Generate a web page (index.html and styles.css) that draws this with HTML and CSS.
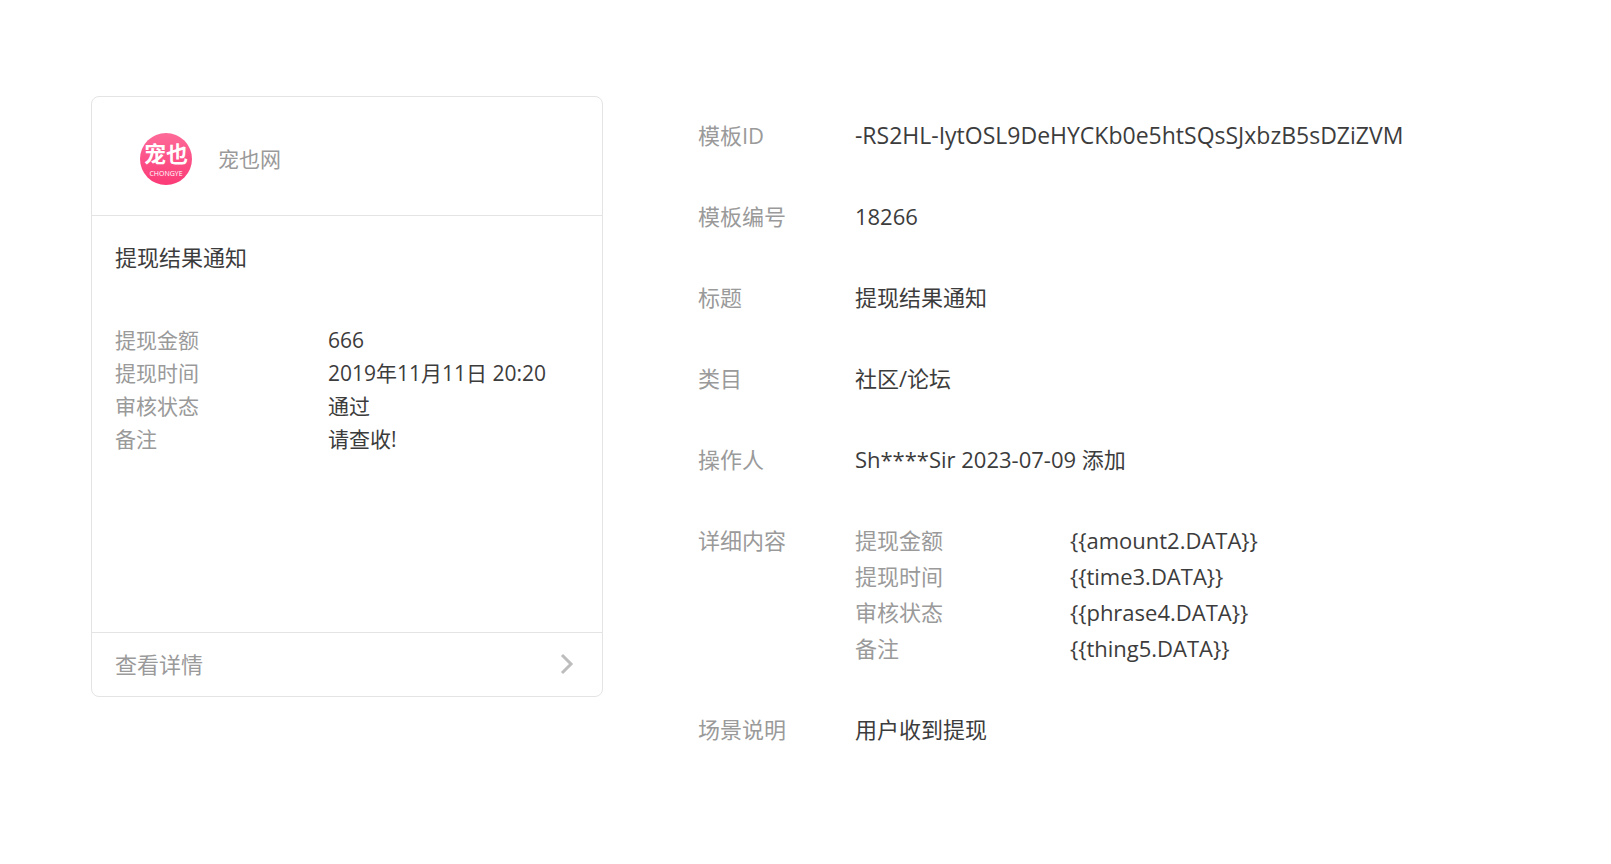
FILE: index.html
```html
<!DOCTYPE html>
<html lang="zh-CN">
<head>
    <meta charset="UTF-8">
    <meta name="viewport" content="width=device-width, initial-scale=1.0">
    <title>模板详情</title>
    <link rel="stylesheet" href="styles.css">
</head>
<body>
    <main>
        <section class="card">
            <header>
                <svg class="logo" viewBox="0 0 52 52" role="img" aria-label="宠也网">
                    <defs>
                        <linearGradient id="rosa" x1="0" y1="0" x2="0" y2="1">
                            <stop offset="0" stop-color="#fd6b99"/>
                            <stop offset="1" stop-color="#fb3a77"/>
                        </linearGradient>
                    </defs>
                    <circle cx="26" cy="26" r="26" fill="url(#rosa)"/>
                    <text class="logo-name" x="26" y="29" text-anchor="middle">宠也</text>
                    <text class="logo-sub" x="26" y="43" text-anchor="middle">CHONGYE</text>
                </svg>
                <span>宠也网</span>
            </header>
            <div class="content">
                <h1>提现结果通知</h1>
                <dl class="fields">
                    <dt>提现金额</dt>
                    <dd>666</dd>
                    <dt>提现时间</dt>
                    <dd>2019年11月11日 20:20</dd>
                    <dt>审核状态</dt>
                    <dd>通过</dd>
                    <dt>备注</dt>
                    <dd>请查收!</dd>
                </dl>
            </div>
            <a class="more" href="#">
                查看详情
                <svg width="14" height="22" viewBox="0 0 14 22" aria-hidden="true">
                    <path d="M2 2l9 9-9 9" fill="none" stroke="#bdbdbd" stroke-width="3"/>
                </svg>
            </a>
        </section>

        <dl class="details">
            <dt>模板ID</dt>
            <dd class="template-id">-RS2HL-IytOSL9DeHYCKb0e5htSQsSJxbzB5sDZiZVM</dd>
            <dt>模板编号</dt>
            <dd>18266</dd>
            <dt>标题</dt>
            <dd>提现结果通知</dd>
            <dt>类目</dt>
            <dd>社区/论坛</dd>
            <dt>操作人</dt>
            <dd>Sh****Sir 2023-07-09 添加</dd>
            <dt>详细内容</dt>
            <dd>
                <dl class="keys">
                    <dt>提现金额</dt>
                    <dd>{{amount2.DATA}}</dd>
                    <dt>提现时间</dt>
                    <dd>{{time3.DATA}}</dd>
                    <dt>审核状态</dt>
                    <dd>{{phrase4.DATA}}</dd>
                    <dt>备注</dt>
                    <dd>{{thing5.DATA}}</dd>
                </dl>
            </dd>
            <dt>场景说明</dt>
            <dd>用户收到提现</dd>
        </dl>
    </main>
</body>
</html>
```
FILE: styles.css
```css
* {
    margin: 0;
    padding: 0;
    box-sizing: border-box;
}

body {
    font-family: "Open Sans", "Noto Sans CJK SC", sans-serif;
    font-size: 22px;
    line-height: 36px;
    color: #3c3c3c;
    background-color: #fff;
}

main {
    display: grid;
    grid-template-columns: 5fr 8fr;
    gap: 95px;
    align-items: start;
    padding: 96px 94px 96px 91px;
}

dt {
    color: #9a9a9a;
}

/* Tarjeta de vista previa */
.card {
    border: 1px solid #e4e4e4;
    border-radius: 8px;
}

.card header {
    display: flex;
    align-items: center;
    gap: 26px;
    padding: 35px 48px 29px;
    font-size: 21px;
    line-height: 54px;
    color: #9a9a9a;
    border-bottom: 1px solid #e4e4e4;
}

.logo {
    width: 52px;
    height: 52px;
}

.logo text {
    fill: #fff;
}

.logo-name {
    font-size: 22px;
    font-weight: 700;
}

.logo-sub {
    font-size: 7px;
}

.content {
    min-height: 416px;
    padding: 23px;
}

h1 {
    font-size: 22px;
    font-weight: 400;
}

.fields {
    display: grid;
    grid-template-columns: 213px 1fr;
    margin-top: 49px;
    font-size: 21px;
    line-height: 33px;
}

.more {
    display: flex;
    justify-content: space-between;
    align-items: center;
    padding: 13px 28px 14px 23px;
    color: #9a9a9a;
    text-decoration: none;
    border-top: 1px solid #e4e4e4;
}

/* Datos de la plantilla */
.details {
    display: grid;
    grid-template-columns: 157px 1fr;
    row-gap: 45px;
    padding-top: 21px;
}

.template-id {
    font-size: 23px;
}

.keys {
    display: grid;
    grid-template-columns: 215px 1fr;
}
```
